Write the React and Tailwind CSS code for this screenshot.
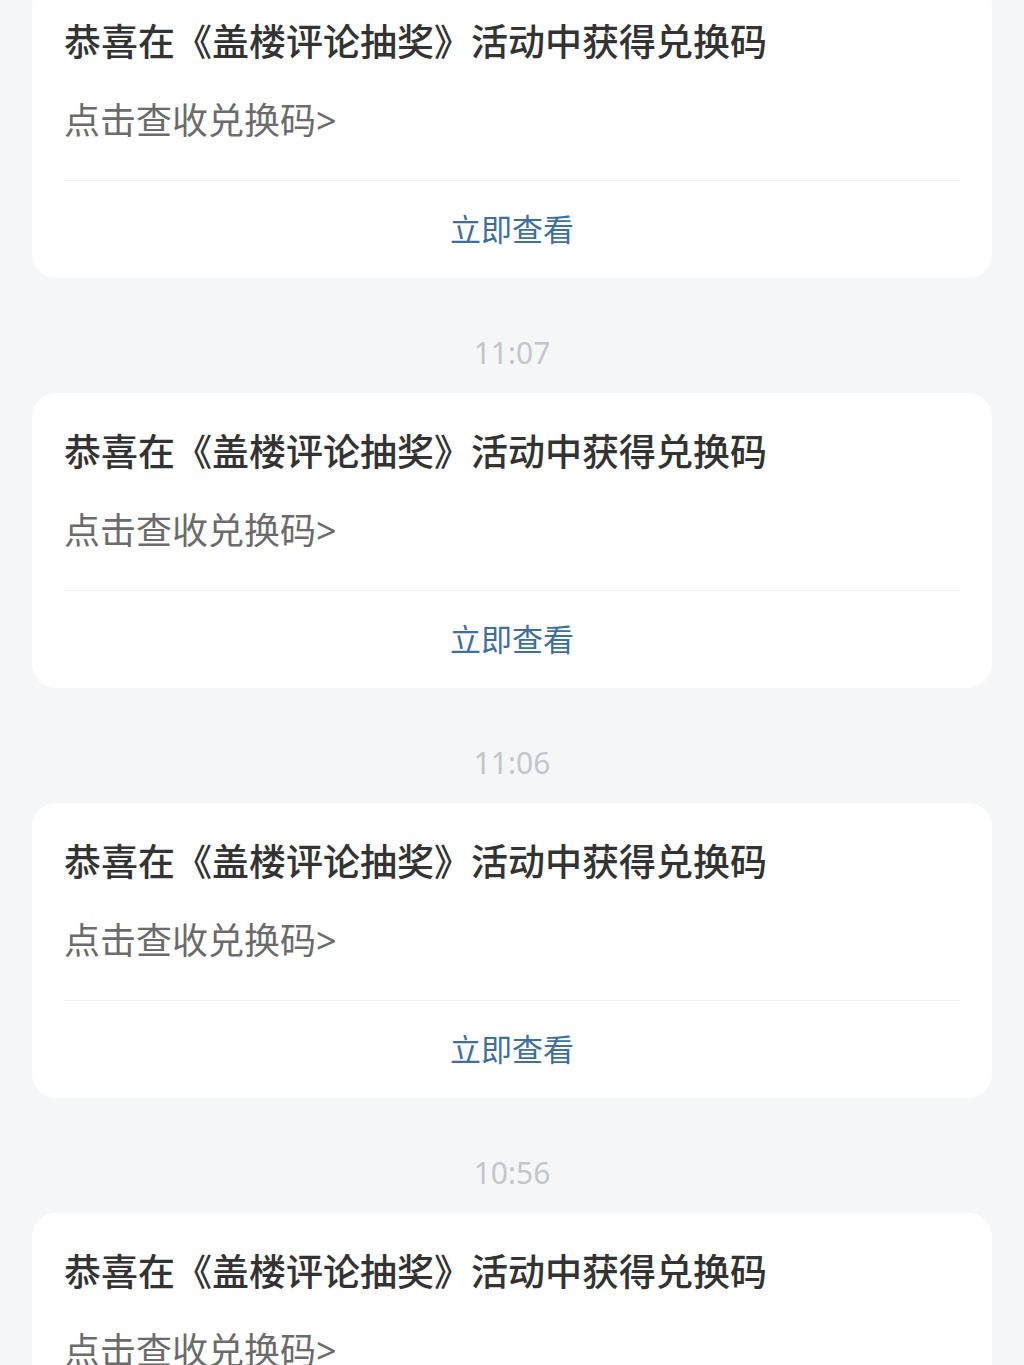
const messages = [
  { time: null },
  { time: '11:07' },
  { time: '11:06' },
  { time: '10:56' },
]

function MessageCard() {
  return (
    <div className="rounded-[24px] bg-white px-8">
      <div className="pt-[35px] text-[37px] font-medium leading-[48px] text-[#333333]">
        恭喜在《盖楼评论抽奖》活动中获得兑换码
      </div>
      <div className="mt-[31px] text-[36px] leading-[48px] text-[#6b6b6b]">点击查收兑换码&gt;</div>
      <div className="mt-[35px] h-px bg-[#f1f2f4]" />
      <div className="flex h-[97px] items-center justify-center text-[31px] text-[#3e6f9e]">立即查看</div>
    </div>
  )
}

export default function App() {
  return (
    <div
      className="h-[1365px] overflow-hidden bg-[#f5f6f8] px-8"
      style={{ fontFamily: '"Noto Sans", "Noto Sans CJK SC", sans-serif' }}
    >
      <div className="-mt-[17px]">
        {messages.map((m, i) => (
          <div key={i}>
            {m.time && (
              <div className="pt-[55px] pb-[20px] text-center text-[30px] leading-[40px] text-[#c3c6ca]">
                {m.time}
              </div>
            )}
            <MessageCard />
          </div>
        ))}
      </div>
    </div>
  )
}
